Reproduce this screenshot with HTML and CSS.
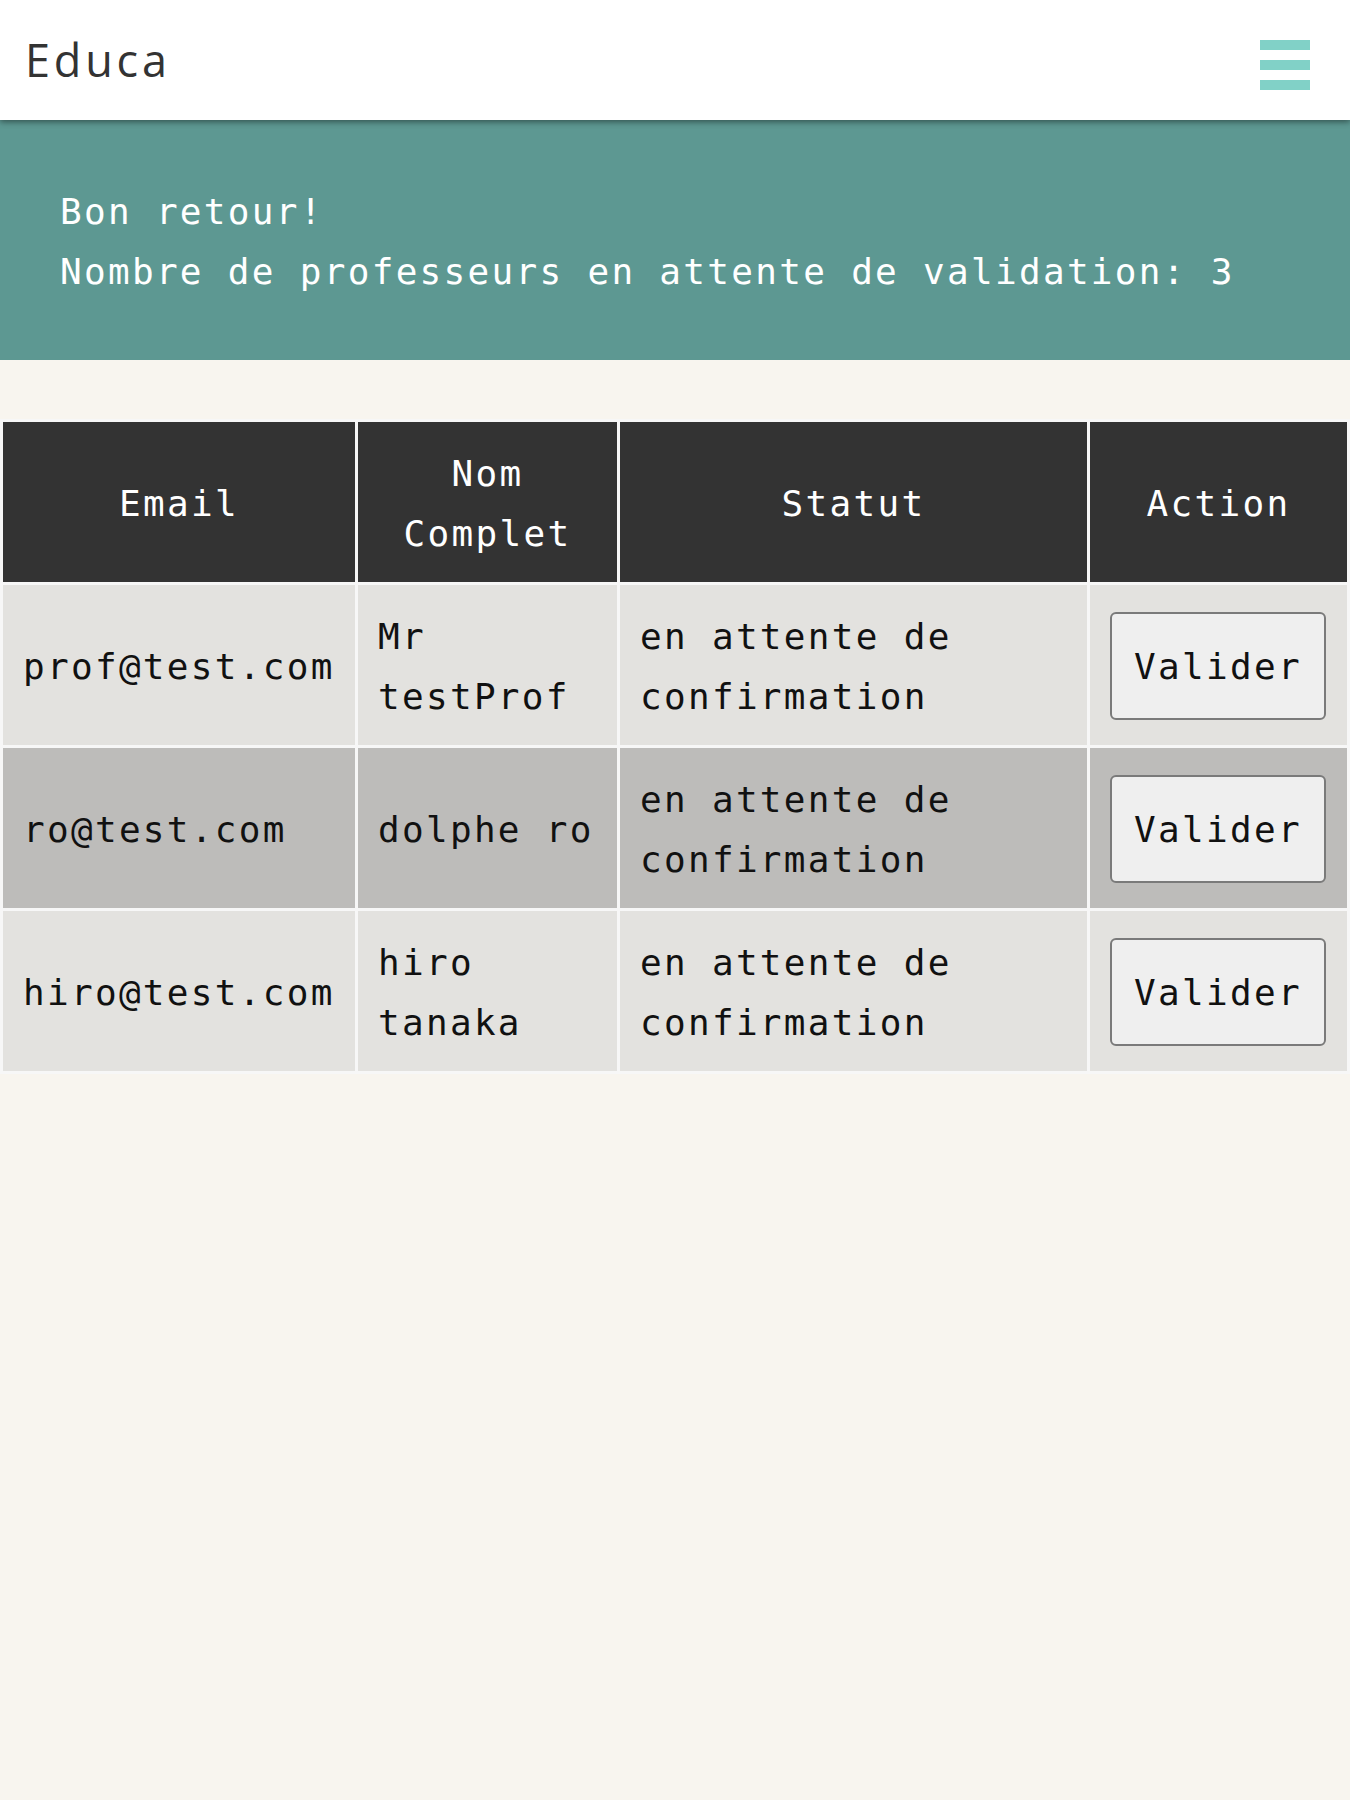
FILE: index.html
```html
<!DOCTYPE html>
<html lang="fr">
<head>
<meta charset="utf-8">
<title>Educa</title>
<link rel="stylesheet" href="styles.css">
</head>
<body>
<header class="topbar">
  <span class="brand">Educa</span>
  <div class="menu-toggle" aria-label="Menu">
    <span class="bar"></span>
    <span class="bar"></span>
    <span class="bar"></span>
  </div>
</header>
<section class="welcome">
  <p class="welcome-line">Bon retour!</p>
  <p class="welcome-line">Nombre de professeurs en attente de validation: 3</p>
</section>
<main class="content">
  <table class="teachers">
    <colgroup>
      <col class="col-email">
      <col class="col-name">
      <col class="col-status">
      <col class="col-action">
    </colgroup>
    <thead>
      <tr>
        <th>Email</th>
        <th>Nom Complet</th>
        <th>Statut</th>
        <th>Action</th>
      </tr>
    </thead>
    <tbody>
      <tr>
        <td>prof@test.com</td>
        <td>Mr testProf</td>
        <td>en attente de confirmation</td>
        <td><button class="validate">Valider</button></td>
      </tr>
      <tr>
        <td>ro@test.com</td>
        <td>dolphe ro</td>
        <td>en attente de confirmation</td>
        <td><button class="validate">Valider</button></td>
      </tr>
      <tr>
        <td>hiro@test.com</td>
        <td>hiro tanaka</td>
        <td>en attente de confirmation</td>
        <td><button class="validate">Valider</button></td>
      </tr>
    </tbody>
  </table>
</main>
</body>
</html>
```
FILE: styles.css
```css
* { box-sizing: border-box; }

body {
  margin: 0;
  background: #f8f5ef;
  font-family: "DejaVu Sans Mono", "Liberation Mono", monospace;
  font-size: 36px;
  letter-spacing: 2.3px;
  color: #111;
}

.topbar {
  position: relative;
  z-index: 2;
  height: 120px;
  background: #fff;
  display: flex;
  align-items: center;
  justify-content: space-between;
  padding: 0 40px 0 25px;
  box-shadow: 0 2px 6px rgba(0, 0, 0, 0.45);
}

.brand {
  font-family: "Open Sans", "Noto Sans", sans-serif;
  font-size: 45px;
  letter-spacing: 3.8px;
  color: #333;
  line-height: 1;
  margin-top: -2px;
}

.menu-toggle {
  display: flex;
  flex-direction: column;
  gap: 10px;
  margin-top: 10px;
}

.bar {
  display: block;
  width: 50px;
  height: 10px;
  background: #81d1c7;
}

.welcome {
  background: #5d9892;
  color: #fff;
  padding: 62px 60px 58px;
}

.welcome-line {
  margin: 0;
  line-height: 60px;
}

.content {
  padding-top: 59px;
}

.teachers {
  width: 100%;
  table-layout: fixed;
  border-collapse: separate;
  border-spacing: 3px;
  background: #f7f7f7;
}

.col-email { width: 352px; }
.col-name { width: 259px; }
.col-status { width: 467px; }
.col-action { width: 257px; }

.teachers th,
.teachers td {
  padding: 22px 20px 18px;
  line-height: 60px;
  vertical-align: middle;
}

.teachers th {
  background: #333;
  color: #fff;
  font-weight: normal;
  text-align: center;
}

.teachers td {
  text-align: left;
  color: #111;
}

.teachers tbody tr:nth-child(odd) td { background: #e3e2df; }
.teachers tbody tr:nth-child(even) td { background: #bdbcba; }

.teachers .action-cell { padding: 20px; }

.validate {
  display: block;
  width: 216px;
  height: 108px;
  margin-top: -2px;
  padding: 0;
  font-family: inherit;
  font-size: 36px;
  letter-spacing: 2.3px;
  color: #111;
  background: #efefef;
  border: 2px solid #7a7a7a;
  border-radius: 6px;
}
```
